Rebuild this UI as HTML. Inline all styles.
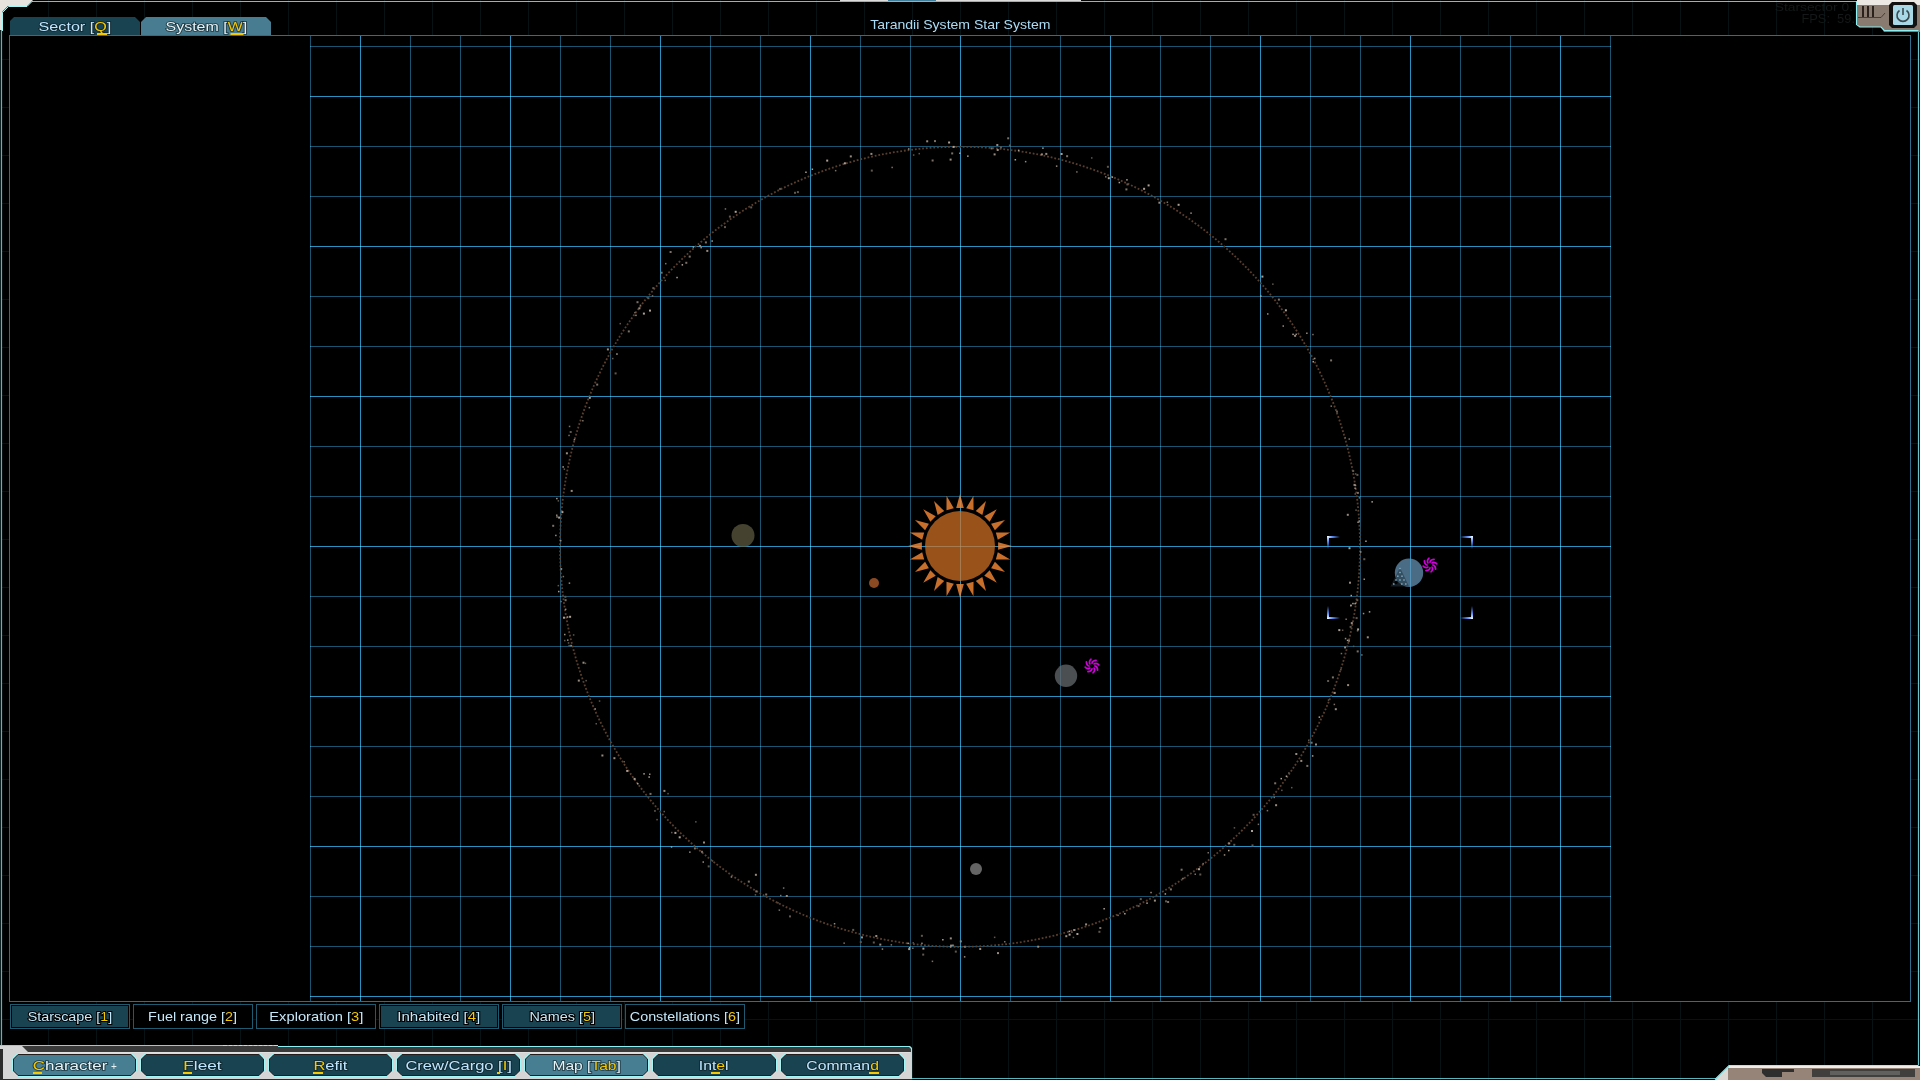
<!DOCTYPE html>
<html><head><meta charset="utf-8"><style>
svg{will-change:transform;}
html,body{margin:0;padding:0;background:#000;width:1920px;height:1080px;overflow:hidden;}
text{font-family:"Liberation Sans",sans-serif;}
</style></head><body>
<svg width="1920" height="1080" viewBox="0 0 1920 1080" style="position:absolute;left:0;top:0"><path d="M0.5 0V1080 M48.5 0V1080 M96.5 0V1080 M144.5 0V1080 M192.5 0V1080 M240.5 0V1080 M288.5 0V1080 M336.5 0V1080 M384.5 0V1080 M432.5 0V1080 M480.5 0V1080 M528.5 0V1080 M576.5 0V1080 M624.5 0V1080 M672.5 0V1080 M720.5 0V1080 M768.5 0V1080 M816.5 0V1080 M864.5 0V1080 M912.5 0V1080 M960.5 0V1080 M1008.5 0V1080 M1056.5 0V1080 M1104.5 0V1080 M1152.5 0V1080 M1200.5 0V1080 M1248.5 0V1080 M1296.5 0V1080 M1344.5 0V1080 M1392.5 0V1080 M1440.5 0V1080 M1488.5 0V1080 M1536.5 0V1080 M1584.5 0V1080 M1632.5 0V1080 M1680.5 0V1080 M1728.5 0V1080 M1776.5 0V1080 M1824.5 0V1080 M1872.5 0V1080 M1920.5 0V1080 M0 59.5H1920 M0 107.5H1920 M0 155.5H1920 M0 203.5H1920 M0 251.5H1920 M0 299.5H1920 M0 347.5H1920 M0 395.5H1920 M0 443.5H1920 M0 491.5H1920 M0 539.5H1920 M0 587.5H1920 M0 635.5H1920 M0 683.5H1920 M0 731.5H1920 M0 779.5H1920 M0 827.5H1920 M0 875.5H1920 M0 923.5H1920 M0 971.5H1920 M0 1019.5H1920" stroke="#061214" stroke-width="1" fill="none"/><rect x="9.5" y="35.5" width="1901" height="966" fill="#000" stroke="#2f6d8c" stroke-width="1"/><path d="M310.5 36V1001 M410.5 36V1001 M460.5 36V1001 M560.5 36V1001 M610.5 36V1001 M710.5 36V1001 M760.5 36V1001 M860.5 36V1001 M910.5 36V1001 M1010.5 36V1001 M1060.5 36V1001 M1160.5 36V1001 M1210.5 36V1001 M1310.5 36V1001 M1360.5 36V1001 M1460.5 36V1001 M1510.5 36V1001 M1610.5 36V1001" stroke="#1b5470" stroke-width="1" fill="none" style="mix-blend-mode:screen"/><path d="M310 46.5H1611 M310 146.5H1611 M310 196.5H1611 M310 296.5H1611 M310 346.5H1611 M310 446.5H1611 M310 496.5H1611 M310 596.5H1611 M310 646.5H1611 M310 746.5H1611 M310 796.5H1611 M310 896.5H1611 M310 946.5H1611" stroke="#1b5470" stroke-width="1" fill="none" style="mix-blend-mode:screen"/><path d="M360.5 36V1001 M510.5 36V1001 M660.5 36V1001 M810.5 36V1001 M960.5 36V1001 M1110.5 36V1001 M1260.5 36V1001 M1410.5 36V1001 M1560.5 36V1001" stroke="#2a90c0" stroke-width="1" fill="none" style="mix-blend-mode:screen"/><path d="M310 96.5H1611 M310 246.5H1611 M310 396.5H1611 M310 546.5H1611 M310 696.5H1611 M310 846.5H1611 M310 996.5H1611" stroke="#2a90c0" stroke-width="1" fill="none" style="mix-blend-mode:screen"/><path d="M960.00 494.00L956.20 507.89L963.80 507.89ZM973.46 495.77L966.19 508.20L973.54 510.17ZM986.00 500.97L975.76 511.09L982.35 514.90ZM996.77 509.23L984.26 516.36L989.64 521.74ZM1005.03 520.00L991.10 523.65L994.91 530.24ZM1010.23 532.54L995.83 532.46L997.80 539.81ZM1012.00 546.00L998.11 542.20L998.11 549.80ZM1010.23 559.46L997.80 552.19L995.83 559.54ZM1005.03 572.00L994.91 561.76L991.10 568.35ZM996.77 582.77L989.64 570.26L984.26 575.64ZM986.00 591.03L982.35 577.10L975.76 580.91ZM973.46 596.23L973.54 581.83L966.19 583.80ZM960.00 598.00L963.80 584.11L956.20 584.11ZM946.54 596.23L953.81 583.80L946.46 581.83ZM934.00 591.03L944.24 580.91L937.65 577.10ZM923.23 582.77L935.74 575.64L930.36 570.26ZM914.97 572.00L928.90 568.35L925.09 561.76ZM909.77 559.46L924.17 559.54L922.20 552.19ZM908.00 546.00L921.89 549.80L921.89 542.20ZM909.77 532.54L922.20 539.81L924.17 532.46ZM914.97 520.00L925.09 530.24L928.90 523.65ZM923.23 509.23L930.36 521.74L935.74 516.36ZM934.00 500.97L937.65 514.90L944.24 511.09ZM946.54 495.77L946.46 510.17L953.81 508.20Z" fill="#ec8234" fill-opacity="0.85"/><circle cx="960" cy="546" r="35" fill="#d67226" fill-opacity="0.72"/><circle cx="960" cy="546.8" r="400" fill="none" stroke="#5a3e2e" stroke-width="1.8" stroke-dasharray="1.8 1.9"/><rect x="778.6" y="909.4" width="1.5" height="1.5" fill="#7a7068"/><rect x="689.1" y="851.4" width="1.5" height="1.5" fill="#978a7e"/><rect x="1346.8" y="639.6" width="1.5" height="1.5" fill="#aca094"/><rect x="1333.7" y="692.3" width="1.5" height="1.5" fill="#978a7e"/><rect x="688.7" y="255.6" width="2" height="2" fill="#7a7068"/><rect x="1354.4" y="487.5" width="1.5" height="1.5" fill="#978a7e"/><rect x="861.0" y="936.4" width="2" height="2" fill="#978a7e"/><rect x="1281.1" y="789.6" width="1.5" height="1.5" fill="#605850"/><rect x="1285.7" y="775.5" width="1.5" height="1.5" fill="#aca094"/><rect x="794.0" y="191.8" width="2" height="2" fill="#605850"/><rect x="564.0" y="633.8" width="1.5" height="1.5" fill="#978a7e"/><rect x="834.9" y="169.9" width="1.5" height="1.5" fill="#7a7068"/><rect x="614.6" y="372.4" width="2" height="2" fill="#605850"/><rect x="651.8" y="295.2" width="1.5" height="1.5" fill="#7a7068"/><rect x="558.1" y="516.6" width="2" height="2" fill="#aca094"/><rect x="1352.9" y="645.6" width="1.5" height="1.5" fill="#605850"/><rect x="747.8" y="880.6" width="2" height="2" fill="#7a7068"/><rect x="1177.6" y="203.8" width="2" height="2" fill="#aca094"/><rect x="826.2" y="159.6" width="2" height="2" fill="#aca094"/><rect x="872.8" y="941.5" width="2" height="2" fill="#605850"/><rect x="1352.2" y="602.8" width="1.5" height="1.5" fill="#aca094"/><rect x="1333.7" y="691.9" width="2" height="2" fill="#978a7e"/><rect x="931.6" y="159.5" width="2" height="2" fill="#7a7068"/><rect x="1165.0" y="900.3" width="2" height="2" fill="#605850"/><rect x="1261.4" y="275.6" width="2" height="2" fill="#aca094"/><rect x="1346.8" y="513.8" width="2" height="2" fill="#978a7e"/><rect x="1194.5" y="873.5" width="1.5" height="1.5" fill="#7a7068"/><rect x="557.6" y="584.9" width="1.5" height="1.5" fill="#605850"/><rect x="879.3" y="943.6" width="2" height="2" fill="#978a7e"/><rect x="811.6" y="168.5" width="1.5" height="1.5" fill="#aca094"/><rect x="1284.9" y="309.3" width="2" height="2" fill="#aca094"/><rect x="648.4" y="776.3" width="1.5" height="1.5" fill="#aca094"/><rect x="692.6" y="246.3" width="1.5" height="1.5" fill="#aca094"/><rect x="1169.9" y="888.4" width="2" height="2" fill="#7a7068"/><rect x="1274.2" y="782.3" width="2" height="2" fill="#7a7068"/><rect x="1318.6" y="716.4" width="1.5" height="1.5" fill="#aca094"/><rect x="1198.0" y="868.2" width="2" height="2" fill="#aca094"/><rect x="1251.0" y="830.0" width="2" height="2" fill="#aca094"/><rect x="564.4" y="595.8" width="2" height="2" fill="#605850"/><rect x="560.3" y="600.8" width="1.5" height="1.5" fill="#7a7068"/><rect x="1072.7" y="936.7" width="1.5" height="1.5" fill="#605850"/><rect x="1354.5" y="493.2" width="1.5" height="1.5" fill="#605850"/><rect x="557.6" y="500.1" width="1.5" height="1.5" fill="#605850"/><rect x="700.4" y="246.9" width="1.5" height="1.5" fill="#978a7e"/><rect x="1126.4" y="183.4" width="2" height="2" fill="#605850"/><rect x="912.9" y="154.3" width="1.5" height="1.5" fill="#605850"/><rect x="563.0" y="616.7" width="2" height="2" fill="#aca094"/><rect x="1106.9" y="165.8" width="2" height="2" fill="#605850"/><rect x="1315.0" y="743.5" width="2" height="2" fill="#978a7e"/><rect x="558.0" y="590.8" width="1.5" height="1.5" fill="#aca094"/><rect x="1292.3" y="333.6" width="1.5" height="1.5" fill="#aca094"/><rect x="1042.2" y="147.4" width="1.5" height="1.5" fill="#aca094"/><rect x="1260.1" y="295.3" width="1.5" height="1.5" fill="#aca094"/><rect x="567.0" y="639.4" width="1.5" height="1.5" fill="#978a7e"/><rect x="1153.9" y="899.6" width="2" height="2" fill="#978a7e"/><rect x="652.3" y="287.1" width="2" height="2" fill="#605850"/><rect x="1182.2" y="877.8" width="1.5" height="1.5" fill="#978a7e"/><rect x="594.5" y="708.2" width="1.5" height="1.5" fill="#978a7e"/><rect x="1355.6" y="617.1" width="2" height="2" fill="#605850"/><rect x="568.3" y="434.7" width="1.5" height="1.5" fill="#7a7068"/><rect x="1294.1" y="334.8" width="2" height="2" fill="#978a7e"/><rect x="562.4" y="466.2" width="1.5" height="1.5" fill="#aca094"/><rect x="1024.9" y="160.9" width="1.5" height="1.5" fill="#978a7e"/><rect x="1207.5" y="852.0" width="1.5" height="1.5" fill="#7a7068"/><rect x="780.0" y="894.8" width="1.5" height="1.5" fill="#7a7068"/><rect x="963.8" y="945.8" width="2" height="2" fill="#7a7068"/><rect x="1014.6" y="159.0" width="1.5" height="1.5" fill="#aca094"/><rect x="777.2" y="902.1" width="1.5" height="1.5" fill="#605850"/><rect x="584.7" y="662.6" width="1.5" height="1.5" fill="#605850"/><rect x="1312.5" y="361.0" width="1.5" height="1.5" fill="#aca094"/><rect x="1223.8" y="854.2" width="1.5" height="1.5" fill="#978a7e"/><rect x="595.5" y="723.0" width="1.5" height="1.5" fill="#605850"/><rect x="1045.3" y="152.9" width="2" height="2" fill="#978a7e"/><rect x="952.2" y="944.5" width="1.5" height="1.5" fill="#aca094"/><rect x="1037.2" y="945.7" width="2" height="2" fill="#978a7e"/><rect x="1357.3" y="521.5" width="1.5" height="1.5" fill="#978a7e"/><rect x="849.8" y="155.4" width="2" height="2" fill="#978a7e"/><rect x="711.8" y="860.2" width="1.5" height="1.5" fill="#605850"/><rect x="1350.5" y="594.8" width="1.5" height="1.5" fill="#aca094"/><rect x="765.2" y="893.5" width="2" height="2" fill="#7a7068"/><rect x="1266.7" y="809.9" width="1.5" height="1.5" fill="#7a7068"/><rect x="921.2" y="942.6" width="1.5" height="1.5" fill="#978a7e"/><rect x="908.2" y="948.1" width="2" height="2" fill="#aca094"/><rect x="1199.3" y="873.5" width="2" height="2" fill="#605850"/><rect x="1306.3" y="764.9" width="2" height="2" fill="#7a7068"/><rect x="912.1" y="947.5" width="1.5" height="1.5" fill="#7a7068"/><rect x="1091.0" y="157.2" width="1.5" height="1.5" fill="#605850"/><rect x="1224.5" y="238.2" width="2" height="2" fill="#7a7068"/><rect x="754.9" y="873.8" width="2" height="2" fill="#978a7e"/><rect x="1340.7" y="652.8" width="1.5" height="1.5" fill="#7a7068"/><rect x="1352.2" y="470.0" width="2" height="2" fill="#605850"/><rect x="563.6" y="468.4" width="1.5" height="1.5" fill="#605850"/><rect x="585.4" y="679.9" width="1.5" height="1.5" fill="#605850"/><rect x="1344.8" y="637.8" width="1.5" height="1.5" fill="#978a7e"/><rect x="561.4" y="511.1" width="2" height="2" fill="#aca094"/><rect x="569.7" y="431.0" width="2" height="2" fill="#605850"/><rect x="805.2" y="171.5" width="1.5" height="1.5" fill="#aca094"/><rect x="1358.5" y="520.3" width="1.5" height="1.5" fill="#978a7e"/><rect x="1349.0" y="581.7" width="2" height="2" fill="#978a7e"/><rect x="1327.1" y="680.0" width="2" height="2" fill="#605850"/><rect x="635.2" y="314.6" width="1.5" height="1.5" fill="#978a7e"/><rect x="912.5" y="942.1" width="1.5" height="1.5" fill="#605850"/><rect x="703.0" y="841.5" width="2" height="2" fill="#978a7e"/><rect x="1366.8" y="636.3" width="2" height="2" fill="#978a7e"/><rect x="707.7" y="865.4" width="2" height="2" fill="#605850"/><rect x="560.0" y="539.9" width="1.5" height="1.5" fill="#978a7e"/><rect x="555.1" y="534.7" width="1.5" height="1.5" fill="#978a7e"/><rect x="637.0" y="783.0" width="1.5" height="1.5" fill="#aca094"/><rect x="1354.4" y="602.9" width="1.5" height="1.5" fill="#aca094"/><rect x="996.3" y="144.0" width="2" height="2" fill="#978a7e"/><rect x="875.3" y="935.0" width="2" height="2" fill="#978a7e"/><rect x="1295.5" y="333.6" width="1.5" height="1.5" fill="#978a7e"/><rect x="1311.9" y="755.2" width="1.5" height="1.5" fill="#aca094"/><rect x="1166.6" y="201.5" width="1.5" height="1.5" fill="#7a7068"/><rect x="681.6" y="264.1" width="1.5" height="1.5" fill="#aca094"/><rect x="1076.1" y="171.2" width="1.5" height="1.5" fill="#7a7068"/><rect x="949.6" y="158.6" width="2" height="2" fill="#978a7e"/><rect x="908.0" y="148.2" width="1.5" height="1.5" fill="#978a7e"/><rect x="934.0" y="140.1" width="2" height="2" fill="#7a7068"/><rect x="564.6" y="599.2" width="2" height="2" fill="#7a7068"/><rect x="664.5" y="279.7" width="1.5" height="1.5" fill="#605850"/><rect x="950.1" y="944.6" width="2" height="2" fill="#978a7e"/><rect x="1363.5" y="578.5" width="1.5" height="1.5" fill="#978a7e"/><rect x="779.1" y="187.9" width="2" height="2" fill="#605850"/><rect x="572.9" y="634.2" width="1.5" height="1.5" fill="#605850"/><rect x="1356.9" y="491.9" width="2" height="2" fill="#7a7068"/><rect x="859.8" y="941.1" width="2" height="2" fill="#605850"/><rect x="654.2" y="810.2" width="1.5" height="1.5" fill="#7a7068"/><rect x="606.9" y="348.4" width="2" height="2" fill="#978a7e"/><rect x="636.5" y="301.2" width="2" height="2" fill="#7a7068"/><rect x="843.9" y="162.3" width="2" height="2" fill="#aca094"/><rect x="1368.8" y="611.1" width="1.5" height="1.5" fill="#aca094"/><rect x="796.9" y="191.1" width="2" height="2" fill="#605850"/><rect x="671.0" y="831.8" width="1.5" height="1.5" fill="#605850"/><rect x="1360.0" y="551.2" width="1.5" height="1.5" fill="#978a7e"/><rect x="870.8" y="169.6" width="2" height="2" fill="#605850"/><rect x="695.1" y="821.1" width="1.5" height="1.5" fill="#605850"/><rect x="1330.1" y="359.4" width="2" height="2" fill="#7a7068"/><rect x="881.7" y="948.3" width="1.5" height="1.5" fill="#978a7e"/><rect x="1356.4" y="473.9" width="2" height="2" fill="#605850"/><rect x="1103.4" y="908.0" width="1.5" height="1.5" fill="#aca094"/><rect x="1312.2" y="333.8" width="1.5" height="1.5" fill="#7a7068"/><rect x="1340.1" y="668.9" width="1.5" height="1.5" fill="#605850"/><rect x="568.7" y="582.4" width="1.5" height="1.5" fill="#978a7e"/><rect x="569.1" y="615.8" width="2" height="2" fill="#aca094"/><rect x="734.7" y="210.8" width="2" height="2" fill="#aca094"/><rect x="588.6" y="406.9" width="1.5" height="1.5" fill="#7a7068"/><rect x="1065.3" y="935.2" width="2" height="2" fill="#978a7e"/><rect x="582.5" y="661.7" width="2" height="2" fill="#978a7e"/><rect x="568.8" y="425.7" width="1.5" height="1.5" fill="#7a7068"/><rect x="1139.8" y="898.1" width="2" height="2" fill="#605850"/><rect x="1105.0" y="176.1" width="1.5" height="1.5" fill="#7a7068"/><rect x="959.2" y="152.5" width="1.5" height="1.5" fill="#aca094"/><rect x="908.8" y="947.0" width="1.5" height="1.5" fill="#aca094"/><rect x="890.6" y="944.1" width="1.5" height="1.5" fill="#7a7068"/><rect x="907.4" y="942.6" width="1.5" height="1.5" fill="#aca094"/><rect x="649.0" y="773.5" width="1.5" height="1.5" fill="#978a7e"/><rect x="1357.1" y="628.4" width="2" height="2" fill="#aca094"/><rect x="1348.5" y="547.2" width="2" height="2" fill="#aca094"/><rect x="963.9" y="956.1" width="1.5" height="1.5" fill="#978a7e"/><rect x="1180.6" y="868.7" width="2" height="2" fill="#7a7068"/><rect x="582.1" y="420.0" width="1.5" height="1.5" fill="#7a7068"/><rect x="1040.9" y="153.4" width="2" height="2" fill="#978a7e"/><rect x="669.6" y="251.0" width="2" height="2" fill="#7a7068"/><rect x="1280.5" y="777.9" width="1.5" height="1.5" fill="#aca094"/><rect x="931.7" y="960.6" width="1.5" height="1.5" fill="#7a7068"/><rect x="565.9" y="452.3" width="2" height="2" fill="#978a7e"/><rect x="564.9" y="608.6" width="1.5" height="1.5" fill="#978a7e"/><rect x="1345.4" y="618.5" width="1.5" height="1.5" fill="#7a7068"/><rect x="1099.3" y="927.0" width="2" height="2" fill="#7a7068"/><rect x="942.1" y="939.0" width="1.5" height="1.5" fill="#aca094"/><rect x="1338.3" y="629.1" width="2" height="2" fill="#aca094"/><rect x="701.0" y="850.8" width="2" height="2" fill="#7a7068"/><rect x="1071.2" y="931.5" width="1.5" height="1.5" fill="#605850"/><rect x="1000.0" y="146.3" width="2" height="2" fill="#605850"/><rect x="1275.1" y="804.2" width="2" height="2" fill="#978a7e"/><rect x="1267.0" y="313.2" width="1.5" height="1.5" fill="#978a7e"/><rect x="1314.0" y="357.7" width="1.5" height="1.5" fill="#978a7e"/><rect x="1350.1" y="605.1" width="1.5" height="1.5" fill="#978a7e"/><rect x="649.5" y="792.9" width="2" height="2" fill="#7a7068"/><rect x="1365.2" y="540.5" width="1.5" height="1.5" fill="#aca094"/><rect x="1349.6" y="625.9" width="2" height="2" fill="#605850"/><rect x="1355.3" y="509.4" width="1.5" height="1.5" fill="#605850"/><rect x="1310.6" y="741.7" width="2" height="2" fill="#7a7068"/><rect x="588.8" y="396.8" width="2" height="2" fill="#aca094"/><rect x="1295.3" y="753.0" width="2" height="2" fill="#978a7e"/><rect x="678.7" y="836.3" width="2" height="2" fill="#aca094"/><rect x="1350.8" y="622.1" width="2" height="2" fill="#978a7e"/><rect x="1111.6" y="176.4" width="1.5" height="1.5" fill="#aca094"/><rect x="1327.8" y="699.3" width="1.5" height="1.5" fill="#605850"/><rect x="1098.4" y="930.8" width="2" height="2" fill="#605850"/><rect x="754.7" y="894.1" width="1.5" height="1.5" fill="#605850"/><rect x="951.2" y="152.4" width="2" height="2" fill="#7a7068"/><rect x="891.4" y="166.7" width="1.5" height="1.5" fill="#7a7068"/><rect x="1147.6" y="184.4" width="2" height="2" fill="#aca094"/><rect x="1060.6" y="153.0" width="2" height="2" fill="#aca094"/><rect x="1228.2" y="842.4" width="2" height="2" fill="#978a7e"/><rect x="647.4" y="297.2" width="2" height="2" fill="#605850"/><rect x="570.3" y="644.8" width="1.5" height="1.5" fill="#aca094"/><rect x="967.1" y="155.4" width="1.5" height="1.5" fill="#aca094"/><rect x="1334.8" y="708.2" width="2" height="2" fill="#978a7e"/><rect x="1358.7" y="497.1" width="1.5" height="1.5" fill="#7a7068"/><rect x="922.4" y="947.6" width="2" height="2" fill="#aca094"/><rect x="1146.3" y="902.4" width="1.5" height="1.5" fill="#aca094"/><rect x="568.4" y="644.9" width="1.5" height="1.5" fill="#605850"/><rect x="852.2" y="928.9" width="2" height="2" fill="#605850"/><rect x="949.8" y="946.2" width="1.5" height="1.5" fill="#978a7e"/><rect x="997.0" y="952.1" width="2" height="2" fill="#978a7e"/><rect x="782.9" y="887.3" width="1.5" height="1.5" fill="#7a7068"/><rect x="724.7" y="208.2" width="1.5" height="1.5" fill="#7a7068"/><rect x="1363.3" y="558.2" width="2" height="2" fill="#605850"/><rect x="1344.1" y="646.4" width="2" height="2" fill="#978a7e"/><rect x="1257.7" y="823.6" width="1.5" height="1.5" fill="#7a7068"/><rect x="670.8" y="846.2" width="1.5" height="1.5" fill="#aca094"/><rect x="639.7" y="304.6" width="1.5" height="1.5" fill="#7a7068"/><rect x="706.3" y="249.9" width="2" height="2" fill="#978a7e"/><rect x="1348.0" y="639.8" width="2" height="2" fill="#7a7068"/><rect x="634.2" y="311.9" width="1.5" height="1.5" fill="#7a7068"/><rect x="1125.4" y="188.4" width="2" height="2" fill="#7a7068"/><rect x="1076.4" y="933.0" width="2" height="2" fill="#aca094"/><rect x="1333.6" y="703.7" width="1.5" height="1.5" fill="#7a7068"/><rect x="728.9" y="215.6" width="2" height="2" fill="#605850"/><rect x="623.5" y="761.0" width="1.5" height="1.5" fill="#605850"/><rect x="948.1" y="141.5" width="2" height="2" fill="#aca094"/><rect x="601.4" y="754.5" width="2" height="2" fill="#978a7e"/><rect x="663.4" y="789.9" width="2" height="2" fill="#978a7e"/><rect x="1330.5" y="405.4" width="1.5" height="1.5" fill="#7a7068"/><rect x="626.2" y="769.9" width="2" height="2" fill="#aca094"/><rect x="1017.9" y="149.6" width="1.5" height="1.5" fill="#aca094"/><rect x="1300.3" y="759.9" width="2" height="2" fill="#978a7e"/><rect x="1202.4" y="862.9" width="1.5" height="1.5" fill="#7a7068"/><rect x="656.3" y="818.9" width="1.5" height="1.5" fill="#605850"/><rect x="1251.5" y="844.4" width="2" height="2" fill="#605850"/><rect x="1331.9" y="676.4" width="2" height="2" fill="#7a7068"/><rect x="1282.5" y="325.3" width="1.5" height="1.5" fill="#978a7e"/><rect x="676.3" y="276.8" width="1.5" height="1.5" fill="#aca094"/><rect x="1124.1" y="913.0" width="1.5" height="1.5" fill="#aca094"/><rect x="702.5" y="861.3" width="1.5" height="1.5" fill="#978a7e"/><rect x="1354.9" y="473.2" width="1.5" height="1.5" fill="#605850"/><rect x="1252.6" y="813.8" width="2" height="2" fill="#605850"/><rect x="724.0" y="226.1" width="2" height="2" fill="#605850"/><rect x="577.8" y="679.6" width="2" height="2" fill="#978a7e"/><rect x="1350.2" y="604.5" width="1.5" height="1.5" fill="#aca094"/><rect x="993.6" y="153.4" width="2" height="2" fill="#978a7e"/><rect x="1107.8" y="177.2" width="2" height="2" fill="#aca094"/><rect x="693.9" y="847.4" width="2" height="2" fill="#7a7068"/><rect x="1356.7" y="650.4" width="2" height="2" fill="#7a7068"/><rect x="1347.1" y="684.1" width="2" height="2" fill="#978a7e"/><rect x="1362.8" y="612.8" width="1.5" height="1.5" fill="#978a7e"/><rect x="1233.3" y="843.8" width="2" height="2" fill="#605850"/><rect x="1348.5" y="438.3" width="1.5" height="1.5" fill="#7a7068"/><rect x="1158.4" y="201.7" width="2" height="2" fill="#978a7e"/><rect x="785.8" y="895.0" width="2" height="2" fill="#978a7e"/><rect x="949.8" y="937.4" width="2" height="2" fill="#978a7e"/><rect x="627.8" y="330.4" width="2" height="2" fill="#7a7068"/><rect x="1085.1" y="923.4" width="2" height="2" fill="#978a7e"/><rect x="699.1" y="244.9" width="2" height="2" fill="#978a7e"/><rect x="1066.1" y="155.2" width="2" height="2" fill="#7a7068"/><rect x="1007.2" y="137.3" width="2" height="2" fill="#7a7068"/><rect x="954.8" y="950.6" width="2" height="2" fill="#605850"/><rect x="922.2" y="953.6" width="2" height="2" fill="#605850"/><rect x="996.7" y="149.0" width="2" height="2" fill="#978a7e"/><rect x="1137.6" y="905.1" width="2" height="2" fill="#605850"/><rect x="704.9" y="241.4" width="2" height="2" fill="#7a7068"/><rect x="952.7" y="145.9" width="2" height="2" fill="#aca094"/><rect x="556.0" y="514.5" width="1.5" height="1.5" fill="#978a7e"/><rect x="562.6" y="575.8" width="1.5" height="1.5" fill="#7a7068"/><rect x="596.2" y="383.6" width="2" height="2" fill="#7a7068"/><rect x="570.7" y="489.9" width="2" height="2" fill="#978a7e"/><rect x="1073.2" y="929.0" width="2" height="2" fill="#978a7e"/><rect x="1228.0" y="849.8" width="1.5" height="1.5" fill="#aca094"/><rect x="1288.1" y="772.2" width="1.5" height="1.5" fill="#605850"/><rect x="633.6" y="777.9" width="2" height="2" fill="#aca094"/><rect x="638.4" y="307.3" width="2" height="2" fill="#978a7e"/><rect x="1164.6" y="893.2" width="1.5" height="1.5" fill="#aca094"/><rect x="1117.3" y="914.6" width="1.5" height="1.5" fill="#7a7068"/><rect x="1306.1" y="332.5" width="1.5" height="1.5" fill="#978a7e"/><rect x="613.4" y="757.2" width="2" height="2" fill="#978a7e"/><rect x="552.2" y="524.8" width="2" height="2" fill="#7a7068"/><rect x="674.4" y="831.9" width="2" height="2" fill="#aca094"/><rect x="1308.0" y="739.5" width="1.5" height="1.5" fill="#605850"/><rect x="1004.0" y="941.0" width="1.5" height="1.5" fill="#7a7068"/><rect x="755.3" y="890.4" width="2" height="2" fill="#7a7068"/><rect x="920.9" y="934.8" width="2" height="2" fill="#605850"/><rect x="843.4" y="942.4" width="1.5" height="1.5" fill="#7a7068"/><rect x="1150.3" y="891.8" width="1.5" height="1.5" fill="#978a7e"/><rect x="1336.0" y="410.6" width="2" height="2" fill="#605850"/><rect x="642.9" y="312.6" width="2" height="2" fill="#aca094"/><rect x="566.8" y="616.3" width="1.5" height="1.5" fill="#aca094"/><rect x="1344.5" y="436.9" width="1.5" height="1.5" fill="#605850"/><rect x="1055.9" y="165.4" width="1.5" height="1.5" fill="#978a7e"/><rect x="1356.8" y="630.0" width="1.5" height="1.5" fill="#7a7068"/><rect x="665.0" y="262.9" width="1.5" height="1.5" fill="#7a7068"/><rect x="1361.1" y="654.2" width="1.5" height="1.5" fill="#7a7068"/><rect x="926.2" y="140.3" width="2" height="2" fill="#978a7e"/><rect x="1126.2" y="179.1" width="1.5" height="1.5" fill="#aca094"/><rect x="1273.5" y="796.7" width="1.5" height="1.5" fill="#7a7068"/><rect x="1143.1" y="187.8" width="2" height="2" fill="#aca094"/><rect x="1291.0" y="786.9" width="1.5" height="1.5" fill="#605850"/><rect x="789.0" y="915.4" width="2" height="2" fill="#605850"/><rect x="1356.3" y="599.2" width="2" height="2" fill="#605850"/><rect x="1008.9" y="144.5" width="2" height="2" fill="#605850"/><rect x="660.6" y="271.7" width="2" height="2" fill="#7a7068"/><rect x="730.7" y="876.2" width="1.5" height="1.5" fill="#978a7e"/><rect x="870.4" y="152.9" width="2" height="2" fill="#978a7e"/><rect x="598.8" y="700.3" width="1.5" height="1.5" fill="#605850"/><rect x="990.6" y="147.4" width="2" height="2" fill="#7a7068"/><rect x="560.7" y="568.2" width="1.5" height="1.5" fill="#aca094"/><rect x="619.5" y="322.9" width="1.5" height="1.5" fill="#605850"/><rect x="1118.6" y="181.8" width="1.5" height="1.5" fill="#aca094"/><rect x="1167.1" y="901.0" width="2" height="2" fill="#7a7068"/><rect x="685.3" y="261.8" width="2" height="2" fill="#7a7068"/><rect x="643.3" y="773.1" width="1.5" height="1.5" fill="#aca094"/><rect x="1272.1" y="283.4" width="1.5" height="1.5" fill="#605850"/><rect x="1068.6" y="930.6" width="1.5" height="1.5" fill="#aca094"/><rect x="1371.4" y="501.1" width="1.5" height="1.5" fill="#aca094"/><rect x="1233.7" y="827.1" width="1.5" height="1.5" fill="#605850"/><rect x="616.2" y="353.3" width="1.5" height="1.5" fill="#aca094"/><rect x="750.2" y="206.4" width="2" height="2" fill="#605850"/><rect x="612.0" y="357.8" width="1.5" height="1.5" fill="#605850"/><rect x="567.8" y="642.2" width="1.5" height="1.5" fill="#605850"/><rect x="833.8" y="923.0" width="1.5" height="1.5" fill="#978a7e"/><rect x="1353.5" y="483.9" width="2" height="2" fill="#978a7e"/><rect x="993.9" y="936.6" width="1.5" height="1.5" fill="#605850"/><rect x="1354.7" y="484.7" width="1.5" height="1.5" fill="#978a7e"/><rect x="663.5" y="810.8" width="1.5" height="1.5" fill="#605850"/><rect x="918.5" y="152.9" width="1.5" height="1.5" fill="#605850"/><rect x="1068.6" y="933.6" width="2" height="2" fill="#aca094"/><rect x="1341.9" y="629.5" width="1.5" height="1.5" fill="#605850"/><rect x="564.0" y="639.8" width="1.5" height="1.5" fill="#605850"/><rect x="649.0" y="309.6" width="2" height="2" fill="#aca094"/><rect x="1190.3" y="212.4" width="1.5" height="1.5" fill="#978a7e"/><rect x="711.4" y="240.3" width="1.5" height="1.5" fill="#aca094"/><rect x="979.2" y="948.0" width="2" height="2" fill="#978a7e"/><rect x="959.8" y="940.4" width="2" height="2" fill="#978a7e"/><rect x="1277.9" y="298.6" width="2" height="2" fill="#7a7068"/><rect x="667.3" y="792.9" width="1.5" height="1.5" fill="#605850"/><rect x="573.7" y="438.9" width="1.5" height="1.5" fill="#978a7e"/><rect x="556.1" y="497.8" width="1.5" height="1.5" fill="#aca094"/><rect x="556.1" y="515.8" width="2" height="2" fill="#605850"/><circle cx="743" cy="535.5" r="11.5" fill="#605d41" fill-opacity="0.72"/><circle cx="874" cy="583" r="5" fill="#c1672f" fill-opacity="0.72"/><circle cx="1066" cy="675.8" r="11.2" fill="#696d71" fill-opacity="0.72"/><circle cx="976" cy="869" r="6" fill="#8c8c8c" fill-opacity="0.72"/><circle cx="1409" cy="572.8" r="14.2" fill="#6796b8" fill-opacity="0.72"/><path d="M1092.00 663.10 L1092.31 662.31 L1092.83 661.58 L1093.62 660.95 L1094.72 660.54 L1096.06 660.42" stroke="#d000dc" stroke-width="1.7" stroke-linecap="round" fill="none"/><path d="M1094.05 663.95 L1094.83 663.61 L1095.71 663.46 L1096.71 663.58 L1097.78 664.06 L1098.82 664.92" stroke="#d000dc" stroke-width="1.7" stroke-linecap="round" fill="none"/><path d="M1094.90 666.00 L1095.69 666.31 L1096.42 666.83 L1097.05 667.62 L1097.46 668.72 L1097.58 670.06" stroke="#d000dc" stroke-width="1.7" stroke-linecap="round" fill="none"/><path d="M1094.05 668.05 L1094.39 668.83 L1094.54 669.71 L1094.42 670.71 L1093.94 671.78 L1093.08 672.82" stroke="#d000dc" stroke-width="1.7" stroke-linecap="round" fill="none"/><path d="M1092.00 668.90 L1091.69 669.69 L1091.17 670.42 L1090.38 671.05 L1089.28 671.46 L1087.94 671.58" stroke="#d000dc" stroke-width="1.7" stroke-linecap="round" fill="none"/><path d="M1089.95 668.05 L1089.17 668.39 L1088.29 668.54 L1087.29 668.42 L1086.22 667.94 L1085.18 667.08" stroke="#d000dc" stroke-width="1.7" stroke-linecap="round" fill="none"/><path d="M1089.10 666.00 L1088.31 665.69 L1087.58 665.17 L1086.95 664.38 L1086.54 663.28 L1086.42 661.94" stroke="#d000dc" stroke-width="1.7" stroke-linecap="round" fill="none"/><path d="M1089.95 663.95 L1089.61 663.17 L1089.46 662.29 L1089.58 661.29 L1090.06 660.22 L1090.92 659.18" stroke="#d000dc" stroke-width="1.7" stroke-linecap="round" fill="none"/><path d="M1430.00 562.10 L1430.31 561.31 L1430.83 560.58 L1431.62 559.95 L1432.72 559.54 L1434.06 559.42" stroke="#d000dc" stroke-width="1.7" stroke-linecap="round" fill="none"/><path d="M1432.05 562.95 L1432.83 562.61 L1433.71 562.46 L1434.71 562.58 L1435.78 563.06 L1436.82 563.92" stroke="#d000dc" stroke-width="1.7" stroke-linecap="round" fill="none"/><path d="M1432.90 565.00 L1433.69 565.31 L1434.42 565.83 L1435.05 566.62 L1435.46 567.72 L1435.58 569.06" stroke="#d000dc" stroke-width="1.7" stroke-linecap="round" fill="none"/><path d="M1432.05 567.05 L1432.39 567.83 L1432.54 568.71 L1432.42 569.71 L1431.94 570.78 L1431.08 571.82" stroke="#d000dc" stroke-width="1.7" stroke-linecap="round" fill="none"/><path d="M1430.00 567.90 L1429.69 568.69 L1429.17 569.42 L1428.38 570.05 L1427.28 570.46 L1425.94 570.58" stroke="#d000dc" stroke-width="1.7" stroke-linecap="round" fill="none"/><path d="M1427.95 567.05 L1427.17 567.39 L1426.29 567.54 L1425.29 567.42 L1424.22 566.94 L1423.18 566.08" stroke="#d000dc" stroke-width="1.7" stroke-linecap="round" fill="none"/><path d="M1427.10 565.00 L1426.31 564.69 L1425.58 564.17 L1424.95 563.38 L1424.54 562.28 L1424.42 560.94" stroke="#d000dc" stroke-width="1.7" stroke-linecap="round" fill="none"/><path d="M1427.95 562.95 L1427.61 562.17 L1427.46 561.29 L1427.58 560.29 L1428.06 559.22 L1428.92 558.18" stroke="#d000dc" stroke-width="1.7" stroke-linecap="round" fill="none"/><defs><linearGradient id="gH" x1="0" y1="0" x2="1" y2="0"><stop offset="0" stop-color="#f0ffff"/><stop offset="0.4" stop-color="#5a90ff"/><stop offset="1" stop-color="#5a90ff" stop-opacity="0"/></linearGradient><linearGradient id="gH2" x1="1" y1="0" x2="0" y2="0"><stop offset="0" stop-color="#f0ffff"/><stop offset="0.4" stop-color="#5a90ff"/><stop offset="1" stop-color="#5a90ff" stop-opacity="0"/></linearGradient><linearGradient id="gV" x1="0" y1="0" x2="0" y2="1"><stop offset="0" stop-color="#f0ffff"/><stop offset="0.4" stop-color="#5a90ff"/><stop offset="1" stop-color="#5a90ff" stop-opacity="0"/></linearGradient><linearGradient id="gV2" x1="0" y1="1" x2="0" y2="0"><stop offset="0" stop-color="#f0ffff"/><stop offset="0.4" stop-color="#5a90ff"/><stop offset="1" stop-color="#5a90ff" stop-opacity="0"/></linearGradient></defs><rect x="1327" y="536" width="13" height="2" fill="url(#gH)"/><rect x="1327" y="536" width="2" height="13" fill="url(#gV)"/><rect x="1460" y="536" width="13" height="2" fill="url(#gH2)"/><rect x="1471" y="536" width="2" height="13" fill="url(#gV)"/><rect x="1327" y="617" width="13" height="2" fill="url(#gH)"/><rect x="1327" y="606" width="2" height="13" fill="url(#gV2)"/><rect x="1460" y="617" width="13" height="2" fill="url(#gH2)"/><rect x="1471" y="606" width="2" height="13" fill="url(#gV2)"/><path d="M1400 567.5 L1409 586.5 L1390.5 586.5Z" fill="#22343f" opacity="0.55"/><rect x="1399.2" y="567.8" width="1.6" height="1.4" fill="#7eaac2"/><rect x="1399.2" y="571.8" width="1.6" height="1.4" fill="#7eaac2"/><rect x="1397.0" y="575.5" width="1.6" height="1.4" fill="#7eaac2"/><rect x="1401.2" y="575.5" width="1.6" height="1.4" fill="#7eaac2"/><rect x="1395.2" y="579.3" width="1.6" height="1.4" fill="#7eaac2"/><rect x="1399.2" y="579.3" width="1.6" height="1.4" fill="#7eaac2"/><rect x="1403.2" y="579.3" width="1.6" height="1.4" fill="#7eaac2"/><rect x="1393.0" y="583.3" width="1.6" height="1.4" fill="#7eaac2"/><rect x="1401.0" y="583.3" width="1.6" height="1.4" fill="#7eaac2"/><rect x="1405.0" y="583.3" width="1.6" height="1.4" fill="#7eaac2"/><circle cx="1396" cy="582.5" r="1.6" fill="#000"/><path d="M32 1.5H1857" stroke="#6cc4ca" stroke-width="1.2" fill="none"/><rect x="840" y="0" width="241" height="1" fill="#dcdcdc"/><rect x="888" y="0" width="48" height="1" fill="#3f7f9c"/><path d="M1.5 30V1045" stroke="#5ab4bc" stroke-width="1.2" fill="none"/><path d="M1918.5 30V1065" stroke="#6cc4ca" stroke-width="1.2" fill="none"/><path d="M911 1078.5H1716" stroke="#5ab4bc" stroke-width="1.2" fill="none"/><path d="M0 0H33L27 6H8L2.5 11.5V30H0Z" fill="#e6e2de"/><path d="M32.5 1L27 6.5H8.5L2.5 12.5V31" stroke="#9ff4f4" stroke-width="1" fill="none"/><path d="M1857 0H1920V32H1884L1881 27H1860L1857 24Z" fill="#8a7b70"/><rect x="1857" y="0" width="63" height="5" fill="#ece8e4"/><rect x="1862" y="6" width="2" height="11" fill="#2a201c"/><rect x="1867" y="6" width="2" height="11" fill="#2a201c"/><rect x="1872" y="6" width="2" height="11" fill="#2a201c"/><path d="M1858 17.5H1881L1885 13" stroke="#3a2e28" stroke-width="0.8" fill="none"/><path d="M1892 2H1914L1917 5V25L1914 28H1892L1889 25V5Z" fill="#111"/><rect x="1893" y="5" width="20" height="20" rx="1.5" fill="#a9d9e6"/><path d="M1899.5 10.5A6 6 0 1 0 1906.5 10.5" stroke="#3b4a50" stroke-width="1.6" fill="none"/><path d="M1903 8V15" stroke="#3b4a50" stroke-width="1.6"/><path d="M1856.5 1V24.5L1859.8 27H1881L1884.3 30.5H1918.5" stroke="#8ef0f2" stroke-width="1.1" fill="none"/><text x="1774.7" y="10.8" font-size="11.5" fill="#141818" textLength="78.3" lengthAdjust="spacingAndGlyphs" >Starsector 0.</text><text x="1801.4" y="22.5" font-size="12.5" fill="#141818" textLength="53.6" lengthAdjust="spacingAndGlyphs" xml:space="preserve">FPS:  59.</text><path d="M1729 1066H1920V1080H1715Z" fill="#ddd8d4"/><rect x="1728" y="1068" width="192" height="12" fill="#968478"/><rect x="1729" y="1066" width="191" height="2" fill="#f0ece8"/><path d="M1762 1069H1782V1077H1766L1762 1073Z" fill="#2e2e2e"/><path d="M1782 1069H1794V1072H1782Z" fill="#2e2e2e"/><path d="M1812 1069H1915V1077H1812Z" fill="#333" opacity="0.85"/><path d="M1830 1071H1900V1075H1830Z" fill="#777" opacity="0.6"/><path d="M1918.5 1065.5H1729L1715 1079.5" stroke="#8ef0f2" stroke-width="1.1" fill="none"/><path d="M10 35V21L14 17H135L140 22V35Z" fill="#1a4352"/><path d="M141 35V22L146 17H266L271 22V35Z" fill="#487c90"/><text x="38.6" y="31" font-size="13" fill="#bfe6ff" textLength="72.7" lengthAdjust="spacingAndGlyphs" stroke="#0b1a20" stroke-width="1.6" stroke-opacity="0.7" paint-order="stroke">Sector [<tspan fill="#f5c800">Q</tspan>]</text><rect x="97" y="33" width="10" height="2" fill="#f5c800"/><text x="165.6" y="31" font-size="13" fill="#e6f2f6" textLength="81.6" lengthAdjust="spacingAndGlyphs" stroke="#0b1a20" stroke-width="1.6" stroke-opacity="0.7" paint-order="stroke">System [<tspan fill="#f5c800">W</tspan>]</text><rect x="230.5" y="33" width="13" height="2" fill="#f5c800"/><text x="870.2" y="29.2" font-size="13" fill="#a9dcf6" textLength="180.2" lengthAdjust="spacingAndGlyphs" >Tarandii System Star System</text><rect x="10.5" y="1004.5" width="119" height="24" fill="#000" stroke="#1f5a70" stroke-width="1"/><rect x="12" y="1006" width="116" height="21" fill="#1a4351"/><text x="27.7" y="1020.5" font-size="13" fill="#c4e8fa" textLength="84.6" lengthAdjust="spacingAndGlyphs" stroke="#000" stroke-width="2" paint-order="stroke">Starscape [<tspan fill="#f5c800">1</tspan>]</text><rect x="133.5" y="1004.5" width="119" height="24" fill="#000" stroke="#1f5a70" stroke-width="1"/><text x="148.1" y="1020.5" font-size="13" fill="#c4e8fa" textLength="88.9" lengthAdjust="spacingAndGlyphs" stroke="#000" stroke-width="2" paint-order="stroke">Fuel range [<tspan fill="#f5c800">2</tspan>]</text><rect x="256.5" y="1004.5" width="119" height="24" fill="#000" stroke="#1f5a70" stroke-width="1"/><text x="269.3" y="1020.5" font-size="13" fill="#c4e8fa" textLength="94.1" lengthAdjust="spacingAndGlyphs" stroke="#000" stroke-width="2" paint-order="stroke">Exploration [<tspan fill="#f5c800">3</tspan>]</text><rect x="379.5" y="1004.5" width="119" height="24" fill="#000" stroke="#1f5a70" stroke-width="1"/><rect x="381" y="1006" width="116" height="21" fill="#1a4351"/><text x="397.3" y="1020.5" font-size="13" fill="#c4e8fa" textLength="83.0" lengthAdjust="spacingAndGlyphs" stroke="#000" stroke-width="2" paint-order="stroke">Inhabited [<tspan fill="#f5c800">4</tspan>]</text><rect x="502.5" y="1004.5" width="119" height="24" fill="#000" stroke="#1f5a70" stroke-width="1"/><rect x="504" y="1006" width="116" height="21" fill="#1a4351"/><text x="529.4" y="1020.5" font-size="13" fill="#c4e8fa" textLength="65.7" lengthAdjust="spacingAndGlyphs" stroke="#000" stroke-width="2" paint-order="stroke">Names [<tspan fill="#f5c800">5</tspan>]</text><rect x="625.5" y="1004.5" width="119" height="24" fill="#000" stroke="#1f5a70" stroke-width="1"/><text x="629.8" y="1020.5" font-size="13" fill="#c4e8fa" textLength="110.1" lengthAdjust="spacingAndGlyphs" stroke="#000" stroke-width="2" paint-order="stroke">Constellations [<tspan fill="#f5c800">6</tspan>]</text><path d="M0 1045H278V1046H910L912 1048V1080H0Z" fill="#d5d5d5"/><rect x="0" y="1045" width="223" height="1" fill="#bdbdbd"/><rect x="227" y="1045" width="2" height="1.5" fill="#b8b8b8"/><rect x="232" y="1045" width="2" height="1.5" fill="#b8b8b8"/><rect x="237" y="1045" width="2" height="1.5" fill="#b8b8b8"/><rect x="242" y="1045" width="2" height="1.5" fill="#b8b8b8"/><rect x="247" y="1045" width="2" height="1.5" fill="#b8b8b8"/><rect x="252" y="1045" width="2" height="1.5" fill="#b8b8b8"/><rect x="257" y="1045" width="2" height="1.5" fill="#b8b8b8"/><rect x="262" y="1045" width="2" height="1.5" fill="#b8b8b8"/><rect x="267" y="1045" width="2" height="1.5" fill="#b8b8b8"/><rect x="272" y="1045" width="2" height="1.5" fill="#b8b8b8"/><path d="M22 1046H910L912 1048V1052H28Z" fill="#3a3a3a"/><rect x="28" y="1052" width="882" height="1" fill="#e0e0e0"/><path d="M0 1049H3V1080H0Z" fill="#2b2b2b"/><rect x="0" y="1079" width="912" height="1" fill="#2a2a2a"/><path d="M278 1046.5H909.5L911.5 1048.5V1078" stroke="#8ef0f2" stroke-width="1.1" fill="none"/><path d="M17.5 1053.5H131.5L136.5 1058.5V1071.5L131.5 1076.5H17.5L12.5 1071.5V1058.5Z" fill="none" stroke="#a2f6f6" stroke-width="1"/><path d="M18.1 1054.5H130.9L135.5 1059.1V1070.9L130.9 1075.5H18.1L13.5 1070.9V1059.1Z" fill="#487e92" stroke="#231c1c" stroke-width="1"/><path d="M145.5 1053.5H259.5L264.5 1058.5V1071.5L259.5 1076.5H145.5L140.5 1071.5V1058.5Z" fill="none" stroke="#a2f6f6" stroke-width="1"/><path d="M146.1 1054.5H258.9L263.5 1059.1V1070.9L258.9 1075.5H146.1L141.5 1070.9V1059.1Z" fill="#1a4351" stroke="#231c1c" stroke-width="1"/><path d="M273.5 1053.5H387.5L392.5 1058.5V1071.5L387.5 1076.5H273.5L268.5 1071.5V1058.5Z" fill="none" stroke="#a2f6f6" stroke-width="1"/><path d="M274.1 1054.5H386.9L391.5 1059.1V1070.9L386.9 1075.5H274.1L269.5 1070.9V1059.1Z" fill="#1a4351" stroke="#231c1c" stroke-width="1"/><path d="M401.5 1053.5H515.5L520.5 1058.5V1071.5L515.5 1076.5H401.5L396.5 1071.5V1058.5Z" fill="none" stroke="#a2f6f6" stroke-width="1"/><path d="M402.1 1054.5H514.9L519.5 1059.1V1070.9L514.9 1075.5H402.1L397.5 1070.9V1059.1Z" fill="#1a4351" stroke="#231c1c" stroke-width="1"/><path d="M529.5 1053.5H643.5L648.5 1058.5V1071.5L643.5 1076.5H529.5L524.5 1071.5V1058.5Z" fill="none" stroke="#a2f6f6" stroke-width="1"/><path d="M530.1 1054.5H642.9L647.5 1059.1V1070.9L642.9 1075.5H530.1L525.5 1070.9V1059.1Z" fill="#487e92" stroke="#231c1c" stroke-width="1"/><path d="M657.5 1053.5H771.5L776.5 1058.5V1071.5L771.5 1076.5H657.5L652.5 1071.5V1058.5Z" fill="none" stroke="#a2f6f6" stroke-width="1"/><path d="M658.1 1054.5H770.9L775.5 1059.1V1070.9L770.9 1075.5H658.1L653.5 1070.9V1059.1Z" fill="#1a4351" stroke="#231c1c" stroke-width="1"/><path d="M785.5 1053.5H899.5L904.5 1058.5V1071.5L899.5 1076.5H785.5L780.5 1071.5V1058.5Z" fill="none" stroke="#a2f6f6" stroke-width="1"/><path d="M786.1 1054.5H898.9L903.5 1059.1V1070.9L898.9 1075.5H786.1L781.5 1070.9V1059.1Z" fill="#1a4351" stroke="#231c1c" stroke-width="1"/><text x="32.8" y="1070" font-size="13" fill="#e6f4f8" textLength="74.5" lengthAdjust="spacingAndGlyphs" stroke="#0b1a20" stroke-width="1.6" stroke-opacity="0.7" paint-order="stroke"><tspan fill="#f5c800">C</tspan>haracter</text><text x="111" y="1070" font-size="10" fill="#e6f4f8">+</text><text x="183.3" y="1070" font-size="13" fill="#bfe6ff" textLength="38.3" lengthAdjust="spacingAndGlyphs" stroke="#0b1a20" stroke-width="1.6" stroke-opacity="0.7" paint-order="stroke"><tspan fill="#f5c800">F</tspan>leet</text><text x="313.4" y="1070" font-size="13" fill="#bfe6ff" textLength="34.0" lengthAdjust="spacingAndGlyphs" stroke="#0b1a20" stroke-width="1.6" stroke-opacity="0.7" paint-order="stroke"><tspan fill="#f5c800">R</tspan>efit</text><text x="405.4" y="1070" font-size="13" fill="#bfe6ff" textLength="106.5" lengthAdjust="spacingAndGlyphs" stroke="#0b1a20" stroke-width="1.6" stroke-opacity="0.7" paint-order="stroke">Crew/Cargo [<tspan fill="#f5c800">I</tspan>]</text><text x="552.5" y="1070" font-size="13" fill="#e6f4f8" textLength="68.3" lengthAdjust="spacingAndGlyphs" stroke="#0b1a20" stroke-width="1.6" stroke-opacity="0.7" paint-order="stroke">Map [<tspan fill="#f5c800">Tab</tspan>]</text><text x="698.8" y="1070" font-size="13" fill="#bfe6ff" textLength="29.8" lengthAdjust="spacingAndGlyphs" stroke="#0b1a20" stroke-width="1.6" stroke-opacity="0.7" paint-order="stroke">Int<tspan fill="#f5c800">e</tspan>l</text><text x="806.3" y="1070" font-size="13" fill="#bfe6ff" textLength="72.6" lengthAdjust="spacingAndGlyphs" stroke="#0b1a20" stroke-width="1.6" stroke-opacity="0.7" paint-order="stroke">Comman<tspan fill="#f5c800">d</tspan></text><rect x="33" y="1072" width="9" height="2" fill="#f5c800"/><rect x="183" y="1072" width="9" height="2" fill="#f5c800"/><rect x="313" y="1072" width="10" height="2" fill="#f5c800"/><rect x="497" y="1072" width="3" height="2" fill="#f5c800"/><rect x="711" y="1072" width="9" height="2" fill="#f5c800"/><rect x="869" y="1072" width="10" height="2" fill="#f5c800"/></svg>
</body></html>
